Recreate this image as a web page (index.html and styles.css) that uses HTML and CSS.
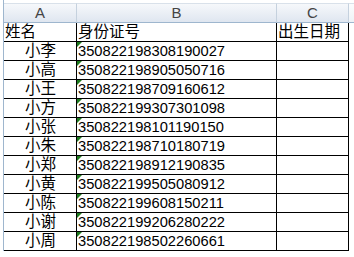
FILE: index.html
```html
<!DOCTYPE html>
<html>
<head>
<meta charset="utf-8">
<link rel="stylesheet" href="styles.css">
</head>
<body>
<div class="sheet">
  <div class="hdr ca">A</div><div class="hdr cb">B</div><div class="hdr cc">C</div><div class="hdr cd"></div>
  <div class="cell ca left">姓名</div><div class="cell cb">身份证号</div><div class="cell cc">出生日期</div><div class="edge"></div>
  <div class="cell ca name">小李</div><div class="cell cb num">350822198308190027</div><div class="cell cc"></div><div class="edge"></div>
  <div class="cell ca name">小高</div><div class="cell cb num">350822198905050716</div><div class="cell cc"></div><div class="edge"></div>
  <div class="cell ca name">小王</div><div class="cell cb num">350822198709160612</div><div class="cell cc"></div><div class="edge"></div>
  <div class="cell ca name">小方</div><div class="cell cb num">350822199307301098</div><div class="cell cc"></div><div class="edge"></div>
  <div class="cell ca name">小张</div><div class="cell cb num">350822198101190150</div><div class="cell cc"></div><div class="edge"></div>
  <div class="cell ca name">小朱</div><div class="cell cb num">350822198710180719</div><div class="cell cc"></div><div class="edge"></div>
  <div class="cell ca name">小郑</div><div class="cell cb num">350822198912190835</div><div class="cell cc"></div><div class="edge"></div>
  <div class="cell ca name">小黄</div><div class="cell cb num">350822199505080912</div><div class="cell cc"></div><div class="edge"></div>
  <div class="cell ca name">小陈</div><div class="cell cb num">350822199608150211</div><div class="cell cc"></div><div class="edge"></div>
  <div class="cell ca name">小谢</div><div class="cell cb num">350822199206280222</div><div class="cell cc"></div><div class="edge"></div>
  <div class="cell ca name">小周</div><div class="cell cb num">350822198502260661</div><div class="cell cc"></div><div class="edge"></div>
</div>
</body>
</html>
```
FILE: styles.css
```css
html, body {
  margin: 0;
  padding: 0;
  background: #ffffff;
}
body {
  width: 354px;
  height: 257px;
  overflow: hidden;
}
.sheet {
  margin-left: 3px;
  padding-top: 3px;
  border-left: 1px solid #9eb6ce;
  display: grid;
  grid-template-columns: 73px 200px 72px 5px;
  grid-auto-rows: 19px;
  grid-template-rows: 20px;
  font-family: "Liberation Sans", "Noto Sans CJK SC", sans-serif;
  color: #000;
}
.hdr {
  box-sizing: border-box;
  background: linear-gradient(#f6f8fb, #dfe6f0);
  border-right: 1px solid #c5d1de;
  border-bottom: 1px solid #9eb6ce;
  border-top: 1px solid #d9e1ea;
  font-size: 15px;
  line-height: 18px;
  text-align: center;
  color: #444;
}
.hdr.cd {
  background: linear-gradient(#fbfcfd, #eef2f6);
  border-right: none;
}
.cell {
  box-sizing: border-box;
  position: relative;
  border-right: 1px solid #000;
  border-bottom: 1px solid #000;
  font-size: 15.5px;
  line-height: 18px;
  padding-left: 1px;
  white-space: nowrap;
  overflow: hidden;
}
.name {
  text-align: center;
}
.left {
  text-align: left;
}
.num {
  font-size: 14.7px;
}
.num::before {
  content: "";
  position: absolute;
  left: 0;
  top: 0;
  width: 0;
  height: 0;
  border-top: 5px solid #1e7b1e;
  border-right: 5px solid transparent;
}
.edge {
  background: #fff;
}
```
